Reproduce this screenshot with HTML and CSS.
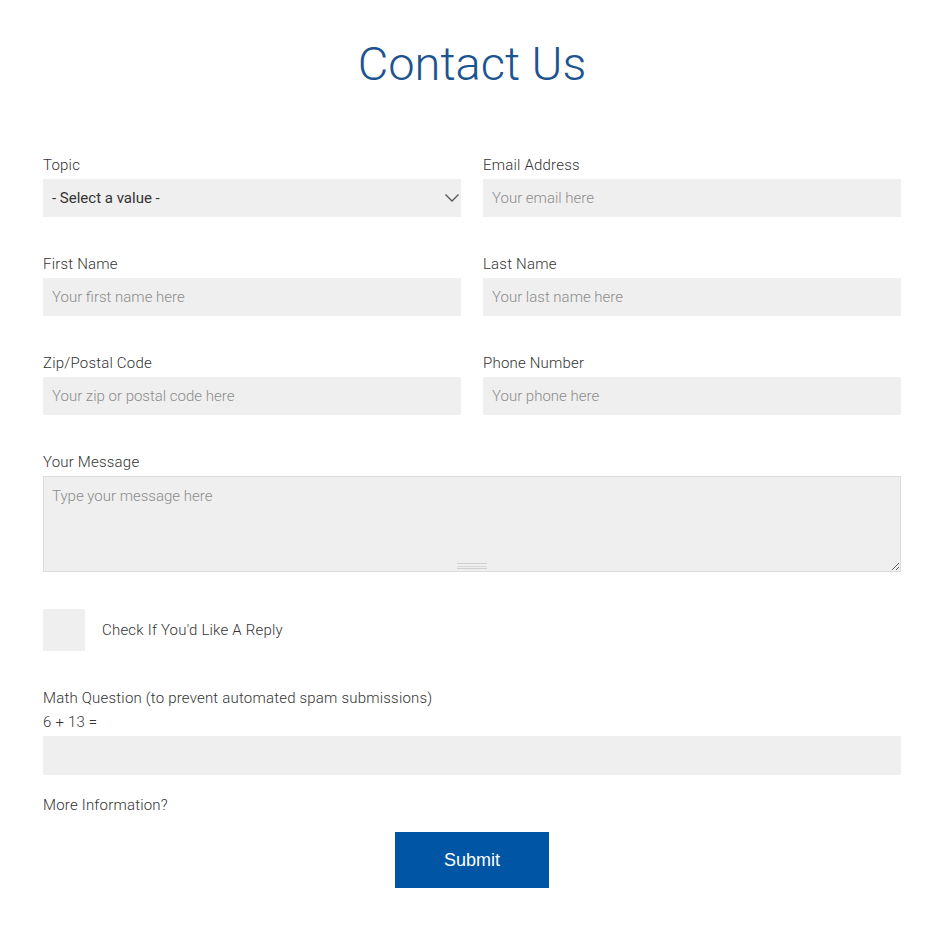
FILE: index.html
```html
<!doctype html>
<html lang="en">
  <head>
    <meta charset="UTF-8" />
    <meta name="viewport" content="width=device-width, initial-scale=1.0" />
    <title>Contact Us</title>
    <link rel="stylesheet" href="styles.css">
  </head>
  <body>
    <div class="page">
      <h1 class="page-title">Contact Us</h1>

      <form class="contact-form" onsubmit="return false;">
        <div class="form-row">
          <div class="form-item">
            <label for="topic">Topic</label>
            <div class="select-wrap">
              <select id="topic" class="form-select">
                <option>- Select a value -</option>
                <option>General</option>
                <option>Support</option>
              </select>
              <svg class="select-arrow" width="16" height="10" viewBox="0 0 16 10">
                <path d="M1.5 1.5 L8 8 L14.5 1.5" fill="none" stroke="#555" stroke-width="1.3" />
              </svg>
            </div>
          </div>
          <div class="form-item">
            <label for="email">Email Address</label>
            <input id="email" class="form-text" type="email" placeholder="Your email here" />
          </div>
        </div>

        <div class="form-row">
          <div class="form-item">
            <label for="first">First Name</label>
            <input id="first" class="form-text" type="text" placeholder="Your first name here" />
          </div>
          <div class="form-item">
            <label for="last">Last Name</label>
            <input id="last" class="form-text" type="text" placeholder="Your last name here" />
          </div>
        </div>

        <div class="form-row">
          <div class="form-item">
            <label for="zip">Zip/Postal Code</label>
            <input id="zip" class="form-text" type="text" placeholder="Your zip or postal code here" />
          </div>
          <div class="form-item">
            <label for="phone">Phone Number</label>
            <input id="phone" class="form-text" type="tel" placeholder="Your phone here" />
          </div>
        </div>

        <div class="form-item">
          <label for="message">Your Message</label>
          <div class="textarea-wrap">
            <textarea id="message" class="form-textarea" placeholder="Type your message here"></textarea>
            <div class="grippie"></div>
          </div>
        </div>

        <div class="checkbox-item">
          <input id="reply" class="form-checkbox" type="checkbox" />
          <label for="reply">Check If You'd Like A Reply</label>
        </div>

        <div class="form-item math-item">
          <label for="math">Math Question (to prevent automated spam submissions)</label>
          <div class="math-question">6 + 13 =</div>
          <input id="math" class="form-text" type="text" />
        </div>

        <div class="more-info">More Information?</div>

        <div class="form-actions">
          <button class="submit-btn" type="submit">Submit</button>
        </div>
      </form>
    </div>
  </body>
</html>
```

FILE: styles.css
```css
* {
  margin: 0;
  padding: 0;
  box-sizing: border-box;
}

body {
  font-family: Roboto, "Liberation Sans", sans-serif;
  font-weight: 300;
  color: #333;
  background: #fff;
}

.page {
  width: 858px;
  margin-left: 43px;
  padding-top: 34px;
}

.page-title {
  font-size: 47px;
  font-weight: 300;
  color: #1d5490;
  text-align: center;
  line-height: 60px;
  margin-bottom: 61px;
}

.form-row {
  display: grid;
  grid-template-columns: 1fr 1fr;
  column-gap: 22px;
}

.form-item {
  display: flex;
  flex-direction: column;
  margin-bottom: 37px;
}

.form-item label,
.math-question,
.more-info,
.checkbox-item label {
  font-size: 15px;
  line-height: 20px;
  letter-spacing: 0.2px;
  color: #333;
}

.form-item label {
  margin-bottom: 4px;
}

.form-text,
.form-select,
.form-textarea {
  font-family: Roboto, "Liberation Sans", sans-serif;
  font-weight: 300;
  font-size: 15px;
  color: #333;
  background: #efefef;
  border: none;
  outline: none;
  width: 100%;
  height: 38px;
  padding: 0 9px;
}

.form-text::placeholder,
.form-textarea::placeholder {
  color: #8c8c8c;
}

.select-wrap {
  position: relative;
}

.form-select {
  appearance: none;
  font-family: Roboto, "Liberation Sans", sans-serif;
  font-weight: 400;
  color: #333;
}

.select-arrow {
  position: absolute;
  right: 1px;
  top: 14px;
  pointer-events: none;
}

.textarea-wrap {
  position: relative;
  border: 1px solid #dcdcdc;
  background: #efefef;
}

.form-textarea {
  display: block;
  height: 94px;
  padding: 10px 8px;
  resize: vertical;
}

.grippie {
  position: absolute;
  left: 50%;
  bottom: 2px;
  width: 30px;
  height: 6px;
  margin-left: -15px;
  border-top: 1px solid #cfcfcf;
  border-bottom: 1px solid #cfcfcf;
  background: linear-gradient(#efefef 0 2px, #d8d8d8 2px 3px, #efefef 3px);
}

.checkbox-item {
  display: flex;
  align-items: center;
  gap: 17px;
  margin-bottom: 37px;
}

.form-checkbox {
  appearance: none;
  width: 42px;
  height: 42px;
  background: #efefef;
  border: none;
}

.math-item {
  margin-bottom: 20px;
}

.math-item label {
  margin-bottom: 4px;
}

.math-question {
  margin-bottom: 4px;
}

.math-item .form-text {
  height: 39px;
}

.more-info {
  margin-bottom: 17px;
}

.form-actions {
  display: flex;
  justify-content: center;
}

.submit-btn {
  width: 154px;
  height: 56px;
  background: #0055a5;
  color: #fff;
  border: none;
  font-family: "Liberation Sans", Arial, sans-serif;
  font-size: 18px;
  font-weight: 400;
  cursor: pointer;
}
```
